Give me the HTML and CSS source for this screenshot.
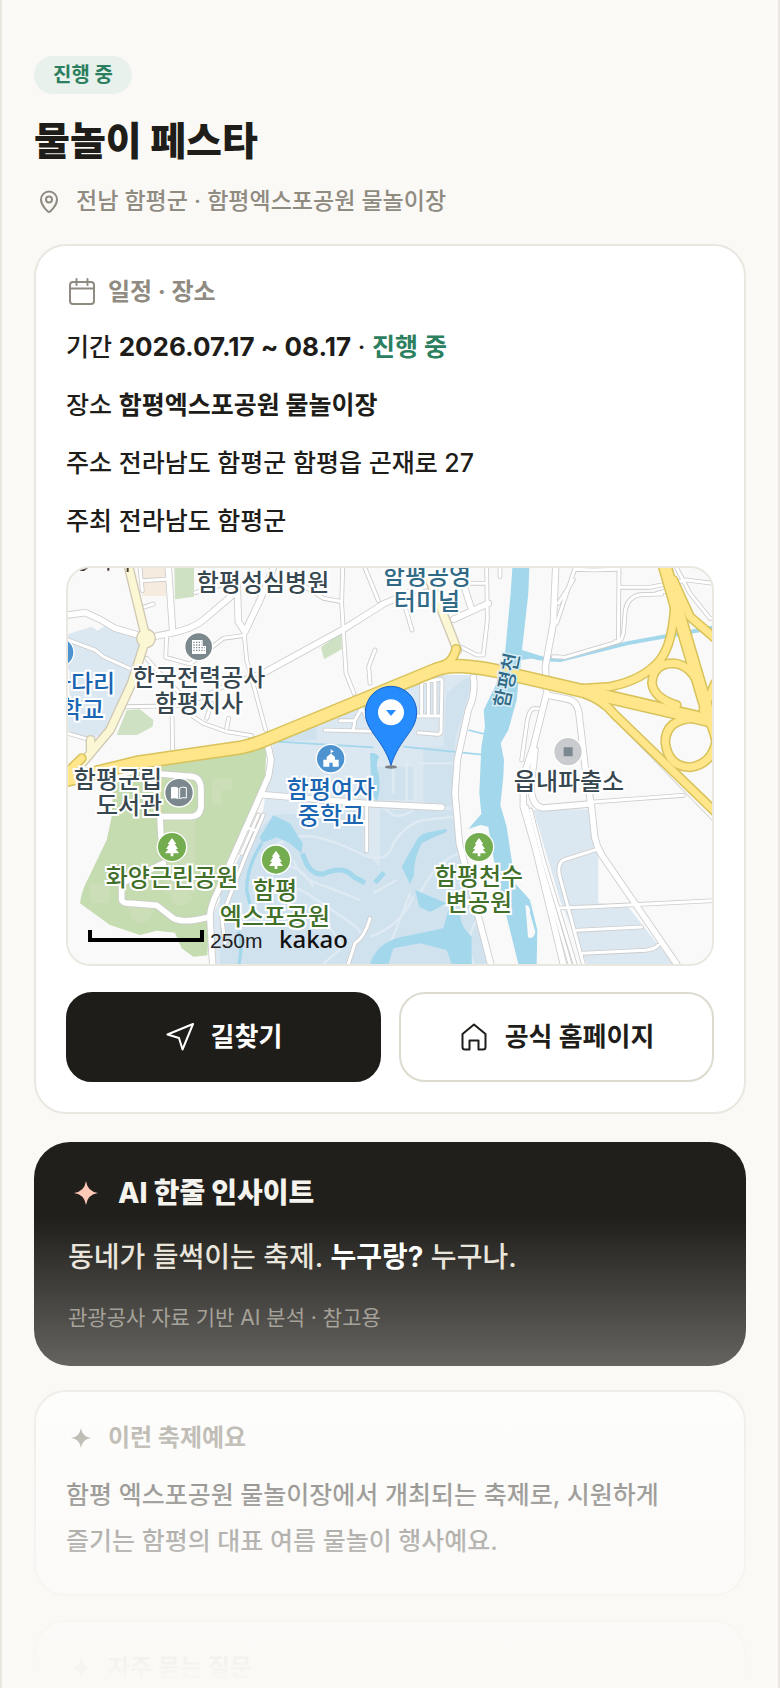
FILE: index.html
```html
<!DOCTYPE html>
<html lang="ko">
<head>
    <meta charset="UTF-8">
    <meta name="viewport" content="width=device-width, initial-scale=1.0">
    <title>물놀이 페스타</title>
    <link rel="stylesheet" href="styles.css">
</head>
<body>
    <main class="page">
        <header class="intro">
            <span class="badge">진행 중</span>
            <h1>물놀이 페스타</h1>
            <p class="location">
                <svg class="icon-pin" viewBox="0 0 30 30" aria-hidden="true"><path d="M15 26c-.8 0-8-6-8-12.500a8 8 0 0 1 16 0c0 6.500-7.200 12.500-8 12.500z"/><circle cx="15" cy="13.500" r="3"/></svg>
                <span>전남 함평군 · 함평엑스포공원 물놀이장</span>
            </p>
        </header>

        <section class="card">
            <h2 class="card-title">
                <svg class="icon-line" viewBox="0 0 30 30" aria-hidden="true"><rect x="4" y="5" width="24" height="22" rx="3"/><path d="M4 11.500h24M10.500 2v6M21.500 2v6"/></svg>
                <span>일정 · 장소</span>
            </h2>
            <ul class="info">
                <li>기간 <strong class="date">2026.07.17 ~ 08.17</strong> · <strong class="status">진행 중</strong></li>
                <li>장소 <strong>함평엑스포공원 물놀이장</strong></li>
                <li>주소 전라남도 함평군 함평읍 곤재로 27</li>
                <li>주최 전라남도 함평군</li>
            </ul>

            <div class="map">
                <div class="map-canvas">
                    <svg class="map-tiles" viewBox="24 24 1932 1188" aria-hidden="true">
                        <defs>
                            <g id="road-s">
                                <path d="M24 240L105 270 130 290 215 328"/>
                                <path d="M24 520L85 538"/>
                                <path d="M240 24L247 92M245 62L318 58M250 142L280 132"/>
                                <path d="M320 230L317 292 390 312 490 235 555 226"/>
                                <path d="M200 440L370 437 440 405 500 375 610 335"/>
                                <path d="M335 400L338 570"/>
                                <path d="M260 295L290 330 360 400 400 470 430 490 500 515 575 527"/>
                                <path d="M440 475L455 430M500 505L506 475"/>
                                <path d="M405 98L500 70 525 80"/>
                                <path d="M553 228L560 300 617 510"/>
                                <path d="M720 70L790 115 840 124"/>
                                <path d="M848 24L845 130 858 340 882 400"/>
                                <path d="M915 24L955 122M945 270L926 320 930 370"/>
                                <path d="M795 510L940 514M840 482H880M880 510L885 480 905 445 930 490"/>
                                <path d="M1035 140L1056 210M1320 24V50"/>
                                <path d="M1280 24L1282 180 1270 285 1250 285 1205 262M1230 70H1280"/>
                                <path d="M1490 190L1545 24M1495 130L1540 60M1545 28L1600 30 1670 28"/>
                                <path d="M1480 290L1515 292 1675 245 1677 24"/>
                                <path d="M1665 245Q1690 250 1692 200L1696 150Q1705 110 1740 104L1805 102"/>
                                <path d="M1680 82L1770 82 1880 60 1960 70M1790 100L1830 90"/>
                                <path d="M1850 24L1890 100 1950 175 1960 175"/>
                                <path d="M1050 372L1140 358Q1146 356 1146 365L1143 515Q1143 523 1130 523L1075 518M1070 468H1143M1085 370V465M1105 366V466M1125 362V466"/>
                                <path d="M1435 446L1420 446Q1408 450 1402 480L1385 600"/>
                                <path d="M610 765L560 880 485 1070 495 1150M595 765L545 880M568 805L590 812"/>
                                <path d="M920 742V872M930 1075Q915 1130 885 1150L865 1212"/>
                                <path d="M1600 726L1870 706"/>
                                <path d="M1605 870L1510 900Q1492 912 1498 945L1570 1212"/>
                                <path d="M1498 1044L1600 1040 1960 1022M1550 1111L1745 1101M1568 1180L1755 1171Q1785 1168 1795 1155"/>
                                <path d="M1400 740L1440 900 1530 1212"/>
                                <path d="M1412 750L1450 900 1545 1212"/>
                            </g>
                            <g id="road-m">
                                <path d="M24 165L75 158 120 178 165 205 245 228"/>
                                <path d="M280 230L340 218Q400 205 430 180L530 95"/>
                                <path d="M325 24L338 215M532 80L535 185 555 215 600 120 640 24"/>
                                <path d="M612 338L850 208 970 132 1100 75"/>
                                <path d="M1180 178L1285 130M1200 40L1232 140"/>
                                <path d="M1487 24L1480 190 1456 320 1460 400 1420 560 1390 650 1390 740 1425 860 1510 1212"/>
                                <path d="M1460 405L1525 418Q1555 425 1558 470L1580 660 1594 735 1604 830Q1610 860 1625 885L1850 1212"/>
                                <path d="M1425 570L1413 680Q1415 740 1450 744L1590 732"/>
                                <path d="M1240 352Q1248 400 1225 450L1192 600 1185 700 1198 850 1292 1212"/>
                                <path d="M618 530L633 600 625 650 590 730 475 990Q445 1050 450 1080L458 1212"/>
                                <path d="M605 704L940 732 1145 742"/>
                                <path d="M300 642L400 650Q423 655 423 690V740Q420 770 390 770H300L303 830"/>
                                <path d="M310 910L185 970V1020Q190 1032 215 1030L290 1036 340 1075Q370 1092 450 1070"/>
                            </g>
                            <g id="road-pale">
                                <path d="M207 24L258 235 215 370 150 510 70 605"/>
                                <path d="M92 540V570"/>
                                <path d="M1105 50L1145 150 1192 270"/>
                            </g>
                            <g id="ramp">
                                <path d="M1845 120Q1840 250 1800 300Q1750 360 1650 380L1560 386"/>
                                <path d="M1840 60L1890 170 1965 235"/>
                                <path d="M1922 390Q1895 312 1838 310Q1778 312 1776 370Q1782 415 1850 435"/>
                                <path d="M1900 475Q1815 480 1816 548Q1825 620 1890 622Q1955 612 1968 545Q1960 500 1930 450L1965 370"/>
                                <path d="M1560 395Q1630 420 1660 460L1965 755"/>
                                <path d="M1150 315Q1180 305 1188 267M24 635L65 595"/>
                            </g>
                            <g id="highway">
                                <path d="M20 660L230 608 540 563Q580 555 620 538L1130 328Q1160 318 1200 318Q1270 322 1340 340L1965 485"/>
                                <path d="M1815 20L1870 210 1950 480"/>
                            </g>
                            <g id="tree"><circle r="44" fill="#74ad4f" stroke="#fff" stroke-width="4"/><path d="M0-27L13-9H8L18 6H11L21 19H4V28H-4V19H-21L-11 6H-18L-8-9H-13Z" fill="#fff"/></g>
                        </defs>

                        <!-- land -->
                        <path fill="#f9f9f9" d="M24 24H1956V1212H24Z"/>
                        <path fill="#dce8f1" d="M24 222L95 200 112 212 140 195 235 235 240 280 190 440 150 510 90 540 24 510Z"/>
                        <path fill="#f5ebdf" d="M235 24H318V108H247Z"/>
                        <path fill="#cfe1c3" d="M343 24H402V110L345 118ZM783 262L845 215V268L792 298ZM170 525L200 450 240 448 280 480 278 500 230 525Z"/>
                        <path fill="#c5dbb0" d="M160 660L420 580 620 545 615 660 520 900 450 1040 442 1186 400 1190 365 1165 345 1118 290 1112 240 1125 150 1095 60 1030Q65 990 85 955L140 840 155 770Z"/>
                        <path fill="#cde0bb" opacity=".7" d="M455 655H515V690H485V735H455ZM310 780H405V1000H310ZM90 970H150V1030H90ZM205 1040Q210 1090 245 1090Q280 1080 285 1035ZM330 1000Q370 980 400 1010Q380 1050 340 1030Z"/>
                        <path fill="#dce8f1" d="M640 540L720 500L1130 345H1240V420L1190 560 1185 760 1215 880 1260 1060 1290 1212H460V1060L610 750Z"/>
                        <path fill="#d1e2ef" d="M655 545L770 495V540ZM1160 400L1215 355H1240L1185 540 1180 740 1090 735V560H1150ZM950 620H1060V720H950ZM640 765L720 760 910 750V870L1000 960 980 1212H480V1000L560 850ZM960 750H1180L1200 880 1250 1080 1280 1212H960Z"/>
                        <path fill="#dce8f1" d="M1420 750L1585 748 1615 870V1030L1700 1035 1840 1212H1580L1500 1020Z"/>

                        <!-- inner paths of the expo park -->
                        <g class="walk">
                            <path d="M640 860Q700 820 760 830T900 880 1000 850Q1040 790 1090 780L1190 770"/>
                            <path d="M1080 1000Q1130 900 1200 880M1080 1010Q1160 1060 1220 1020M1050 1000L980 1180M1060 1010Q1020 1100 930 1130"/>
                            <path d="M580 1000Q680 960 740 1000T860 1080 900 1140M700 900Q720 960 800 980L900 1020M940 1000L1010 960"/>
                            <path d="M1000 600V700M1040 600V720M1075 610H1180M975 740Q1000 790 1060 750M1260 1070Q1210 1120 1240 1212"/>
                            <path d="M620 940Q700 880 760 980M780 1060L850 1160 790 1212"/>
                        </g>

                        <!-- water -->
                        <g fill="#a3d7eb">
                            <path d="M1357 24H1408L1405 100 1386 270 1450 290 1384 300 1375 370 1370 420 1345 510 1322 550 1332 600 1330 650 1321 735 1340 800 1355 900 1365 970 1410 1020 1432 1110 1430 1212H1375L1340 1070 1310 950 1285 800 1262 795 1225 807 1264 762 1258 700 1264 560 1275 500 1271 450 1310 370 1335 280 1352 100Z"/>
                            <path d="M640 766L690 790 728 850 724 880 690 850 650 832 605 850 600 832Z"/>
                            <path d="M1160 806L1100 818Q1075 825 1065 850L1025 920 1050 972 1062 945Q1060 900 1085 850Q1120 830 1160 816Z"/>
                            <path d="M1065 990L1160 1030 1110 1056 1078 1040Z"/>
                            <path d="M930 1212Q950 1150 1020 1132Q1080 1120 1150 1105L1165 1050 1200 1060Q1200 1100 1235 1130V1212H1175L1160 1170 1080 1150 1000 1165 985 1212Z"/>
                            <path d="M930 580Q945 575 958 590Q945 610 955 640Q965 690 950 725L935 700Z"/>
                        </g>
                        <g class="stream">
                            <path stroke-width="12" d="M1385 278Q1430 300 1500 300L1700 250 1965 202"/>
                            <path stroke-width="10" d="M605 850Q560 920 560 990L570 1032M535 1115Q550 1150 537 1212"/>
                            <path stroke-width="15" d="M728 880Q745 945 790 942Q850 915 880 950L915 968M945 968L972 938"/>
                            <path stroke-width="5" d="M650 545L940 562M1030 560L1265 584M1225 510L1280 524"/>
                        </g>
                        <path fill="#f9f9f9" d="M1396 1035Q1412 1035 1410 1060L1426 1115Q1420 1140 1404 1132L1400 1080Z"/>

                        <!-- roads -->
                        <g class="roads">
                            <use href="#road-s" stroke="#ccc" stroke-width="14"/>
                            <use href="#road-m" stroke="#ccc" stroke-width="22"/>
                            <use href="#road-s" stroke="#fff" stroke-width="9"/>
                            <use href="#road-m" stroke="#fff" stroke-width="17"/>
                            <path stroke="#ccc" stroke-width="3" d="M1570 415Q1620 430 1660 475L1965 790"/>
                            <use href="#road-pale" stroke="#cfc9b4" stroke-width="30"/>
                            <circle cx="258" cy="235" r="28" fill="#fbf6d3" stroke="#cfc9b4" stroke-width="4"/>
                            <use href="#road-pale" stroke="#fbf6d3" stroke-width="22"/>
                            <use href="#ramp" stroke="#d8c25a" stroke-width="30"/>
                            <use href="#highway" stroke="#d8c25a" stroke-width="43"/>
                            <use href="#ramp" stroke="#ffe68a" stroke-width="21"/>
                            <use href="#highway" stroke="#ffe68a" stroke-width="34"/>
                        </g>
                        <path fill="#4a3c37" d="M62 24H84L72 33H60ZM142 24H148V32H142ZM200 24H206V36H200Z"/>

                        <!-- place icons -->
                        <circle cx="-2" cy="277" r="44" fill="#4d93cf" stroke="#fff" stroke-width="4"/>
                        <g transform="translate(416 260)">
                            <circle r="42" fill="#7b888e" stroke="#fff" stroke-width="4"/>
                            <path fill="#fff" d="M-20-20H12V-2H22V22H-20Z"/>
                            <path stroke="#7b888e" stroke-width="4" stroke-dasharray="4 4" d="M-16-13H9M-16-5H9M-16 3H18M-16 11H18"/>
                        </g>
                        <g transform="translate(357 698)">
                            <circle r="43" fill="#7b888e" stroke="#fff" stroke-width="4"/>
                            <path fill="#fff" d="M-24-16Q-10-20-2-14V20Q-12 14-24 18Z"/>
                            <path fill="none" stroke="#fff" stroke-width="3" d="M22-15Q10-19 2-14V18Q12 13 22 16Z"/>
                        </g>
                        <g transform="translate(812 596)">
                            <circle r="43" fill="#4d93cf" stroke="#fff" stroke-width="4"/>
                            <path fill="#fff" d="M0-28H2V-26L10-22 2-18V-15L13-5V3H24V24H6V12H-4V24H-22V3H-12V-5L0-15Z"/>
                        </g>
                        <g transform="translate(1524 575)">
                            <circle r="43" fill="#c9cbcf" stroke="#fff" stroke-width="4"/>
                            <path fill="#7b888e" d="M-13-13H14V14H-13Z"/>
                        </g>
                        <use href="#tree" x="336" y="861"/>
                        <use href="#tree" x="648" y="899"/>
                        <use href="#tree" x="1257" y="861"/>

                        <!-- marker -->
                        <ellipse cx="993" cy="621" rx="18" ry="5" fill="#555" opacity=".7"/>
                        <path fill="#268bfd" stroke="#1763c4" stroke-width="3" d="M993 379A77 77 0 0 0 916 456C916 515 968 535 993 616C1018 535 1070 515 1070 456A77 77 0 0 0 993 379Z"/>
                        <circle cx="993" cy="457" r="39" fill="#fff"/>
                        <path fill="#268bfd" d="M978 450H1008L993 468Z"/>

                        <path class="scale-bar" d="M90 1110V1140H426V1110"/>
                    </svg>
                    <span class="place hospital">함평성심병원</span>
                    <span class="place terminal">함평공영<br>터미널</span>
                    <span class="place kepco">한국전력공사<br>함평지사</span>
                    <span class="place school school-west">나다리<br>학교</span>
                    <span class="place library">함평군립<br>도서관</span>
                    <span class="place school school-girls">함평여자<br>중학교</span>
                    <span class="place police">읍내파출소</span>
                    <span class="place park park-hwayang">화양근린공원</span>
                    <span class="place park park-expo">함평<br>엑스포공원</span>
                    <span class="place park park-river">함평천수<br>변공원</span>
                    <span class="place river">함평천</span>
                    <span class="scale">250m</span>
                    <span class="provider">kakao</span>
                </div>
            </div>

            <div class="actions">
                <button type="button" class="btn btn-dark">
                    <svg class="icon-line" viewBox="0 0 30 30" aria-hidden="true"><path d="M28 2L2.500 12.500L14 16L17.500 27.500Z"/></svg>
                    길찾기
                </button>
                <a href="#" class="btn btn-light">
                    <svg class="icon-line" viewBox="0 0 30 30" aria-hidden="true"><path d="M15 2.500L3.500 12V25Q3.500 27.500 6 27.500H10.500V18.500H19.500V27.500H24Q26.500 27.500 26.500 25V12Z"/></svg>
                    공식 홈페이지
                </a>
            </div>
        </section>

        <section class="insight">
            <h2>
                <svg viewBox="0 0 36 36" aria-hidden="true"><path d="M18 6Q19.500 16.500 30 18Q19.500 19.500 18 30Q16.500 19.500 6 18Q16.500 16.500 18 6Z"/></svg>
                <span>AI 한줄 인사이트</span>
            </h2>
            <p class="quote">동네가 들썩이는 축제. <strong>누구랑?</strong> 누구나.</p>
            <p class="note">관광공사 자료 기반 AI 분석 · 참고용</p>
        </section>

        <section class="card">
            <h2 class="card-title">
                <svg class="icon-star" viewBox="0 0 30 30" aria-hidden="true"><path d="M15 5Q16.200 13.800 25 15Q16.200 16.200 15 25Q13.800 16.200 5 15Q13.800 13.800 15 5Z"/></svg>
                <span>이런 축제예요</span>
            </h2>
            <p class="summary">함평 엑스포공원 물놀이장에서 개최되는 축제로, 시원하게 즐기는 함평의 대표 여름 물놀이 행사예요.</p>
        </section>

        <section class="card card-last">
            <h2 class="card-title">
                <svg class="icon-star" viewBox="0 0 30 30" aria-hidden="true"><path d="M15 5Q16.200 13.800 25 15Q16.200 16.200 15 25Q13.800 16.200 5 15Q13.800 13.800 15 5Z"/></svg>
                <span>자주 묻는 질문</span>
            </h2>
        </section>

        <div class="fade"></div>
    </main>
</body>
</html>
```
FILE: styles.css
```css
:root {
    --bg: #faf9f6;
    --ink: #1e1d19;
    --muted: #8f8b81;
    --line: #e9e7e0;
    --green: #2c8060;
}

* {
    box-sizing: border-box;
    margin: 0;
    padding: 0;
}

body {
    background-color: var(--bg);
    color: var(--ink);
    font-family: Inter, "Noto Sans CJK KR", sans-serif;
    font-size: 25px;
    font-weight: 500;
}

.page {
    position: relative;
    height: 100vh;
    overflow: hidden;
    padding: 56px 32px 0;
    border-left: 2px solid var(--line);
    border-right: 2px solid var(--line);
}

.intro {
    margin-bottom: 26px;
}

.badge {
    display: block;
    width: fit-content;
    padding: 0 19px;
    border-radius: 19px;
    background-color: #e8f1ec;
    color: var(--green);
    font-size: 20px;
    font-weight: 700;
    line-height: 38px;
}

h1 {
    margin-top: 22px;
    font-size: 39px;
    font-weight: 800;
    line-height: 50px;
}

.location {
    display: flex;
    align-items: center;
    gap: 12px;
    margin-top: 18px;
    color: var(--muted);
    font-size: 23px;
    line-height: 34px;
}

svg {
    flex-shrink: 0;
}

.icon-pin,
.icon-line {
    width: 30px;
    height: 30px;
    fill: none;
    stroke: currentColor;
    stroke-width: 2;
    stroke-linejoin: round;
    stroke-linecap: round;
}

.icon-star {
    width: 30px;
    height: 30px;
    fill: currentColor;
}

.card {
    margin-top: 24px;
    padding: 30px;
    border: 2px solid var(--line);
    border-radius: 32px;
    background-color: #fff;
}

.card-title {
    display: flex;
    align-items: center;
    gap: 12px;
    margin-bottom: 18px;
    color: var(--muted);
    font-size: 24px;
    font-weight: 700;
    line-height: 32px;
}

.info {
    display: grid;
    gap: 16px;
    list-style: none;
    line-height: 42px;
}

.date {
    font-size: 26px;
}

.status {
    color: var(--green);
}

/* map */
.map {
    display: flex;
    justify-content: center;
    height: 400px;
    margin-top: 24px;
    overflow: hidden;
    border: 2px solid var(--line);
    border-radius: 24px;
    background-color: #f9f9f9;
}

.map-canvas {
    position: relative;
    flex: 0 0 644px;
    height: 396px;
}

.map-tiles {
    display: block;
    width: 644px;
    height: 396px;
}

.walk,
.stream,
.roads,
.scale-bar {
    fill: none;
}

.walk {
    stroke: #dfeaf3;
    stroke-width: 7;
}

.stream {
    stroke: #a3d7eb;
}

.roads {
    stroke-linecap: round;
    stroke-linejoin: round;
}

.scale-bar {
    stroke: #000;
    stroke-width: 12;
}

.place {
    position: absolute;
    transform: translate(-50%, -50%);
    color: #37474f;
    font-family: "Noto Sans CJK KR", sans-serif;
    font-size: 24px;
    font-weight: 500;
    line-height: 26px;
    text-align: center;
    white-space: nowrap;
    -webkit-text-stroke: 4px #fff;
    paint-order: stroke fill;
}

.hospital { left: 195px; top: 13px; }
.terminal { left: 359px; top: 19px; color: #306a87; }
.kepco { left: 131px; top: 121px; }
.library { left: 50px; top: 223px; text-align: right; }
.police { left: 501px; top: 212px; }

.school { color: #1a66b3; }
.school-west { left: 14px; top: 127px; }
.school-girls { left: 263px; top: 233px; }

.park { color: #41702a; }
.park-hwayang { left: 104px; top: 308px; }
.park-expo { left: 207px; top: 334px; }
.park-river { left: 411px; top: 320px; }

.river {
    left: 438px;
    top: 112px;
    transform: translate(-50%, -50%) rotate(-78deg);
    color: #306a87;
    font-size: 20px;
    -webkit-text-stroke: 3px #d6ecf5;
}

.scale {
    position: absolute;
    left: 142px;
    bottom: 11px;
    color: #222;
    font-family: "Liberation Sans", sans-serif;
    font-size: 21px;
    font-weight: 400;
}

.provider {
    position: absolute;
    left: 211px;
    bottom: 9px;
    color: #111;
    font-family: "Noto Sans", sans-serif;
    font-size: 24px;
    line-height: 32px;
}

/* buttons */
.actions {
    display: grid;
    grid-template-columns: 1fr 1fr;
    gap: 18px;
    margin-top: 26px;
}

.btn {
    display: flex;
    align-items: center;
    justify-content: center;
    gap: 16px;
    height: 90px;
    border: 2px solid var(--ink);
    border-radius: 26px;
    font-family: inherit;
    font-size: 26px;
    font-weight: 700;
    line-height: 30px;
    text-decoration: none;
    cursor: pointer;
}

.btn-dark {
    background-color: var(--ink);
    color: #fff;
}

.btn-light {
    border-color: #dddbd0;
    background-color: #fff;
    color: var(--ink);
}

/* AI insight */
.insight {
    margin-top: 28px;
    padding: 34px 34px 32px;
    border-radius: 36px;
    background-color: #201f1b;
    color: #e8e4da;
}

.insight h2 {
    display: flex;
    align-items: center;
    gap: 14px;
    color: #f5f3ee;
    font-size: 28px;
    font-weight: 800;
    line-height: 34px;
}

.insight svg {
    width: 36px;
    height: 36px;
    margin: -1px 0;
    fill: #ffc9b8;
}

.quote {
    margin-top: 24px;
    font-size: 28px;
    line-height: 46px;
}

.quote strong {
    color: #fff;
}

.note {
    margin-top: 22px;
    color: #8f8b81;
    font-size: 21px;
    font-weight: 400;
    line-height: 32px;
}

.summary {
    line-height: 46px;
    word-break: keep-all;
}

.card-last {
    min-height: 200px;
}

.fade {
    position: absolute;
    right: 0;
    bottom: 0;
    left: 0;
    height: 470px;
    margin: 0 -2px;
    background: linear-gradient(rgba(250, 249, 246, 0), var(--bg));
    pointer-events: none;
}
```
